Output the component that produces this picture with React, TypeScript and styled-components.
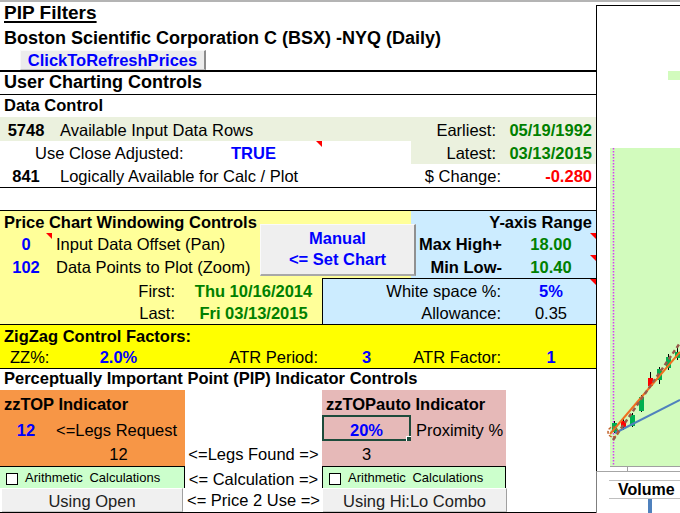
import React from "react";
import styled, { createGlobalStyle } from "styled-components";

const GlobalStyle = createGlobalStyle`
  html, body {
    margin: 0;
    padding: 0;
    background: #fff;
  }
  body {
    font-family: "Liberation Sans", Arial, sans-serif;
    font-size: 16.5px;
    color: #000;
  }
`;

// sheet columns A..F
const COLS = "52px 133px 137px 89px 95px 90px";

const tones = {
  black: "#000",
  blue: "#0000ff",
  green: "#008000",
  red: "#ff0000",
};
type Tone = keyof typeof tones;
type Align = "left" | "center" | "right";
const justify: Record<Align, string> = {
  left: "flex-start",
  center: "center",
  right: "flex-end",
};

const Page = styled.div`
  width: 680px;
  height: 513px;
  box-sizing: border-box;
  overflow: hidden;
  display: flex;
  border-top: 2px solid #b4b4b4;
`;

const Sheet = styled.div`
  width: 596px;
  flex-shrink: 0;
  display: flex;
  flex-direction: column;
`;

const Line = styled.div<{ $h: number; $size?: number; $under?: boolean; $border?: number }>`
  height: ${({ $h }) => $h}px;
  display: flex;
  align-items: flex-end;
  padding: 0 0 2px 4px;
  box-sizing: border-box;
  font-size: ${({ $size }) => $size ?? 16.5}px;
  font-weight: bold;
  line-height: 20px;
  white-space: nowrap;
  text-decoration: ${({ $under }) => ($under ? "underline" : "none")};
  text-decoration-thickness: 2px;
  text-underline-offset: 2px;
  border-bottom: ${({ $border }) => ($border ? `${$border}px solid #000` : "none")};
`;

const ButtonRow = styled.div`
  height: 22px;
  box-sizing: border-box;
  padding-left: 20px;
  border-bottom: 2px solid #000;
`;

const RefreshButton = styled.div`
  width: 186px;
  height: 20px;
  box-sizing: border-box;
  background: #ececec;
  border-top: 1px solid #f8f8f8;
  border-left: 1px solid #f8f8f8;
  border-right: 2px solid #8c8c8c;
  border-bottom: 1px solid #c4c4c4;
  color: #0000ff;
  font-weight: bold;
  line-height: 18px;
  text-align: center;
`;

const Grid = styled.div<{ $rows: string; $bg?: string; $top?: boolean; $bottom?: boolean }>`
  position: relative;
  display: grid;
  grid-template-columns: ${COLS};
  grid-template-rows: ${({ $rows }) => $rows};
  background: ${({ $bg }) => $bg ?? "transparent"};
  border-top: ${({ $top }) => ($top ? "1px solid #000" : "none")};
  border-bottom: ${({ $bottom }) => ($bottom ? "1px solid #000" : "none")};
`;

const Cell = styled.div<{
  $span?: number;
  $align?: Align;
  $bg?: string;
  $pl?: number;
  $pr?: number;
  $pb?: number;
  $edge?: boolean;
}>`
  grid-column: span ${({ $span }) => $span ?? 1};
  position: relative;
  display: flex;
  align-items: flex-end;
  justify-content: ${({ $align }) => justify[$align ?? "left"]};
  padding: 0 ${({ $pr }) => $pr ?? 0}px ${({ $pb }) => $pb ?? 2}px
    ${({ $pl }) => $pl ?? 0}px;
  background: ${({ $bg }) => $bg ?? "transparent"};
  border-top: ${({ $edge }) => ($edge ? "1px solid #000" : "none")};
  line-height: 18px;
  white-space: nowrap;
  min-width: 0;
`;

const EdgeCell = styled(Cell)`
  border-left: 1px solid #000;
`;

const Val = styled.span<{ $tone?: Tone; $bold?: boolean }>`
  color: ${({ $tone }) => tones[$tone ?? "black"]};
  font-weight: ${({ $tone, $bold }) => ($bold || ($tone && $tone !== "black") ? "bold" : "normal")};
`;

const Note = styled.span`
  position: absolute;
  top: 0;
  right: 0;
  width: 0;
  height: 0;
  border-top: 6px solid #ff0000;
  border-left: 6px solid transparent;
`;

const ManualButton = styled.div`
  position: absolute;
  left: 260px;
  top: 13px;
  width: 156px;
  height: 52px;
  box-sizing: border-box;
  padding-bottom: 2px;
  background: #efefef;
  border-top: 1px solid #fafafa;
  border-left: 1px solid #fafafa;
  border-right: 2px solid #909090;
  border-bottom: 2px solid #a8a8a8;
  display: flex;
  flex-direction: column;
  justify-content: center;
  align-items: center;
  color: #0000ff;
  font-weight: bold;
  line-height: 21px;
  z-index: 1;
`;

const Selected = styled(Cell)`
  border: 2px solid #1d4b3b;
  &::after {
    content: "";
    position: absolute;
    right: -4px;
    bottom: -4px;
    width: 5px;
    height: 5px;
    background: #1d4b3b;
    border: 1px solid #fff;
  }
`;

const CheckCell = styled.div<{ $right?: boolean }>`
  grid-column: span 2;
  box-sizing: border-box;
  background: #ccffcc;
  border: 1px solid #000;
  border-bottom: none;
  border-left: ${({ $right }) => ($right ? "1px solid #000" : "none")};
  display: flex;
  align-items: flex-end;
  gap: 7px;
  padding: 0 0 3px 6px;
  font-size: 13px;
  line-height: 14px;
  word-spacing: 3px;
  white-space: nowrap;
`;

const Box = styled.span`
  width: 12px;
  height: 12px;
  box-sizing: border-box;
  flex-shrink: 0;
  background: #fff;
  border: 1px solid #000;
`;

const FormButton = styled.div<{ $right?: boolean }>`
  grid-column: span 2;
  margin: ${({ $right }) => ($right ? "0 -1px 0 1px" : "0 2px 0 2px")};
  box-sizing: border-box;
  background: #f0f0f0;
  border-top: 1px solid #fff;
  border-right: 1px solid #a0a0a0;
  border-bottom: 1px solid #c8c8c8;
  display: flex;
  align-items: center;
  justify-content: center;
  padding-top: 2px;
  color: #222;
  white-space: nowrap;
`;

const ChartPane = styled.div`
  flex: 1;
  display: flex;
  flex-direction: column;
  margin-top: 3px;
`;

const PriceFrame = styled.div`
  height: 466px;
  box-sizing: border-box;
  border-top: 1px solid #000;
  border-left: 1px solid #000;
  background: #fff;
  svg {
    display: block;
  }
`;

const VolumeFrame = styled.div`
  flex: 1;
  border-top: 1px solid #a6a6a6;
  border-left: 1px solid #7f7f7f;
  padding-top: 8px;
`;

const VolumeTitle = styled.div`
  margin-left: 12px;
  height: 17px;
  border-top: 1px solid #bfbfbf;
  border-bottom: 1px solid #bfbfbf;
  padding-left: 9px;
  font-size: 16px;
  font-weight: bold;
  line-height: 17px;
`;

const VolumeBar = styled.div`
  margin-left: 51px;
  width: 4px;
  height: 15px;
  background: #4f81bd;
`;

const YELLOW = "#ffff99";
const BLUE = "#ccecff";
const OLIVE = "#ebf1de";
const ORANGE = "#f79646";
const PINK = "#e6b9b8";

const candles = [
  { x: 614, hi: 421, lo: 433, top: 423, bot: 432, up: true },
  { x: 623, hi: 417, lo: 430, top: 421, bot: 427, up: false },
  { x: 632, hi: 413, lo: 427, top: 415, bot: 426, up: true },
  { x: 641, hi: 395, lo: 412, top: 397, bot: 411, up: true },
  { x: 650, hi: 372, lo: 388, top: 378, bot: 386, up: false },
  { x: 659, hi: 367, lo: 384, top: 369, bot: 380, up: true },
  { x: 668, hi: 354, lo: 370, top: 357, bot: 368, up: true },
  { x: 677, hi: 348, lo: 360, top: 352, bot: 358, up: true },
];

const PriceChart = () => (
  <svg width={83} height={465} viewBox="597 6 83 465">
    <rect x={668} y={71} width={12} height={9} fill="#d2fbbd" />
    <rect x={610} y={148} width={70} height={318} fill="#d2fbbd" />
    <line x1={613.5} y1={148} x2={613.5} y2={466} stroke="#d63cf5" strokeWidth={1.5} strokeDasharray="1.5 1.5" />
    <line x1={610} y1={466.5} x2={680} y2={466.5} stroke="#a0a0a0" />
    <line x1={627.5} y1={466} x2={627.5} y2={471} stroke="#a0a0a0" />
    {candles.map((c) => (
      <g key={c.x}>
        <line x1={c.x + 0.5} y1={c.hi} x2={c.x + 0.5} y2={c.lo} stroke="#000" />
        <rect x={c.x - 2} y={c.top} width={5} height={c.bot - c.top} fill={c.up ? "#00b050" : "#ff0000"} />
      </g>
    ))}
    <line x1={615} y1={433} x2={680} y2={400} stroke="#4f81bd" strokeWidth={2} />
    <line x1={610} y1={434} x2={680} y2={352} stroke="#f07020" strokeWidth={2} />
    <line x1={613} y1={440} x2={680} y2={343} stroke="#985a4a" strokeWidth={2.5} strokeDasharray="4 3" />
    <circle cx={613} cy={432} r={5} fill="none" stroke="#c0622a" strokeWidth={1.5} strokeDasharray="3 1.5" />
  </svg>
);

export default function App() {
  return (
    <>
      <GlobalStyle />
      <Page>
        <Sheet>
          <Line $h={23} $size={19} $under>
            PIP Filters
          </Line>
          <Line $h={25} $size={18}>
            Boston Scientific Corporation C (BSX) -NYQ (Daily)
          </Line>
          <ButtonRow>
            <RefreshButton>ClickToRefreshPrices</RefreshButton>
          </ButtonRow>
          <Line $h={23} $size={18} $border={1}>
            User Charting Controls
          </Line>
          <Line $h={22}>Data Control</Line>

          <Grid $rows="24px 23px 23px" $bottom>
            <Cell $align="center" $bg={OLIVE}>
              <Val $bold>5748</Val>
            </Cell>
            <Cell $span={3} $pl={8} $bg={OLIVE}>
              Available Input Data Rows
            </Cell>
            <Cell $align="right" $pr={10} $bg={OLIVE}>
              Earliest:
            </Cell>
            <Cell $align="right" $pr={4} $bg={OLIVE}>
              <Val $tone="green">05/19/1992</Val>
            </Cell>

            <Cell $span={2} $pl={35}>
              Use Close Adjusted:
            </Cell>
            <Cell $align="center">
              <Val $tone="blue">TRUE</Val>
              <Note />
            </Cell>
            <Cell />
            <Cell $align="right" $pr={10} $bg={OLIVE}>
              Latest:
            </Cell>
            <Cell $align="right" $pr={4} $bg={OLIVE}>
              <Val $tone="green">03/13/2015</Val>
            </Cell>

            <Cell $align="center">
              <Val $bold>841</Val>
            </Cell>
            <Cell $span={3} $pl={8}>
              Logically Available for Calc / Plot
            </Cell>
            <Cell $align="right" $pr={5}>
              $ Change:
            </Cell>
            <Cell $align="right" $pr={4}>
              <Val $tone="red">-0.280</Val>
            </Cell>
          </Grid>

          <Grid $rows="22px" $bottom>
            <Cell $span={6} />
          </Grid>

          <Grid $rows="22px 22px 23px 24px 22px">
            <Cell $span={4} $pl={4} $bg={YELLOW}>
              <Val $bold>Price Chart Windowing Controls</Val>
            </Cell>
            <Cell $span={2} $align="right" $pr={4} $bg={BLUE}>
              <Val $bold>Y-axis Range</Val>
            </Cell>

            <Cell $align="center" $bg={YELLOW}>
              <Val $tone="blue">0</Val>
              <Note />
            </Cell>
            <Cell $span={3} $pl={4} $bg={YELLOW}>
              Input Data Offset (Pan)
            </Cell>
            <Cell $align="right" $pr={4} $bg={BLUE}>
              <Val $bold>Max High+</Val>
            </Cell>
            <Cell $align="center" $bg={BLUE}>
              <Val $tone="green">18.00</Val>
              <Note />
            </Cell>

            <Cell $align="center" $bg={YELLOW}>
              <Val $tone="blue">102</Val>
            </Cell>
            <Cell $span={3} $pl={4} $bg={YELLOW}>
              Data Points to Plot (Zoom)
            </Cell>
            <Cell $align="right" $pr={4} $bg={BLUE}>
              <Val $bold>Min Low-</Val>
            </Cell>
            <Cell $align="center" $bg={BLUE}>
              <Val $tone="green">10.40</Val>
              <Note />
            </Cell>

            <Cell $span={2} $align="right" $pr={10} $bg={YELLOW}>
              First:
            </Cell>
            <Cell $align="center" $bg={YELLOW}>
              <Val $tone="green">Thu 10/16/2014</Val>
            </Cell>
            <EdgeCell $span={2} $edge $align="right" $pr={5} $bg={BLUE}>
              White space %:
            </EdgeCell>
            <Cell $edge $align="center" $bg={BLUE}>
              <Val $tone="blue">5%</Val>
              <Note />
            </Cell>

            <Cell $span={2} $align="right" $pr={10} $bg={YELLOW}>
              Last:
            </Cell>
            <Cell $align="center" $bg={YELLOW}>
              <Val $tone="green">Fri 03/13/2015</Val>
            </Cell>
            <EdgeCell $span={2} $align="right" $pr={5} $bg={BLUE}>
              Allowance:
            </EdgeCell>
            <Cell $align="center" $bg={BLUE}>
              0.35
            </Cell>

            <ManualButton>
              <span>Manual</span>
              <span>&lt;= Set Chart</span>
            </ManualButton>
          </Grid>

          <Grid $rows="22px 21px" $bg="#ffff00" $top $bottom>
            <Cell $span={6} $pl={4}>
              <Val $bold>ZigZag Control Factors:</Val>
            </Cell>
            <Cell $pl={10}>ZZ%:</Cell>
            <Cell $align="center">
              <Val $tone="blue">2.0%</Val>
            </Cell>
            <Cell $align="right" $pr={4}>
              ATR Period:
            </Cell>
            <Cell $align="center">
              <Val $tone="blue">3</Val>
            </Cell>
            <Cell $align="right" $pr={5}>
              ATR Factor:
            </Cell>
            <Cell $align="center">
              <Val $tone="blue">1</Val>
            </Cell>
          </Grid>

          <Line $h={21}>Perceptually Important Point (PIP) Indicator Controls</Line>

          <Grid $rows="25px 26px 25px 22px 24px" $bottom>
            <Cell $span={2} $pl={4} $bg={ORANGE}>
              <Val $bold>zzTOP Indicator</Val>
            </Cell>
            <Cell />
            <Cell $span={2} $pl={4} $bg={PINK}>
              <Val $bold>zzTOPauto Indicator</Val>
            </Cell>
            <Cell />

            <Cell $align="center" $bg={ORANGE}>
              <Val $tone="blue">12</Val>
            </Cell>
            <Cell $pl={4} $bg={ORANGE}>
              &lt;=Legs Request
            </Cell>
            <Cell />
            <Selected $align="center" $pb={0} $bg={PINK}>
              <Val $tone="blue">20%</Val>
            </Selected>
            <Cell $pl={5} $bg={PINK}>
              Proximity %
            </Cell>
            <Cell />

            <Cell $bg={ORANGE} />
            <Cell $align="center" $pb={3} $bg={ORANGE}>
              12
            </Cell>
            <Cell $align="center" $pb={3}>
              &lt;=Legs Found =&gt;
            </Cell>
            <Cell $align="center" $pb={3} $bg={PINK}>
              3
            </Cell>
            <Cell $bg={PINK} />
            <Cell />

            <CheckCell>
              <Box />
              Arithmetic Calculations
            </CheckCell>
            <Cell $align="center" $pb={0}>
              &lt;= Calculation =&gt;
            </Cell>
            <CheckCell $right>
              <Box />
              Arithmetic Calculations
            </CheckCell>
            <Cell />

            <FormButton>Using Open</FormButton>
            <Cell $align="center" $pb={3}>
              &lt;= Price 2 Use =&gt;
            </Cell>
            <FormButton $right>Using Hi:Lo Combo</FormButton>
            <Cell />
          </Grid>
        </Sheet>

        <ChartPane>
          <PriceFrame>
            <PriceChart />
          </PriceFrame>
          <VolumeFrame>
            <VolumeTitle>Volume</VolumeTitle>
            <VolumeBar />
          </VolumeFrame>
        </ChartPane>
      </Page>
    </>
  );
}
